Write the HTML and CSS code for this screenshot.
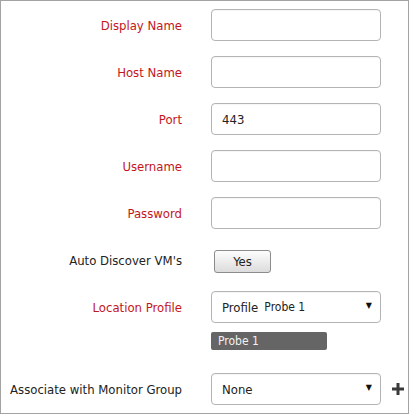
FILE: index.html
```html
<!DOCTYPE html>
<html>
<head>
<meta charset="utf-8">
<link rel="stylesheet" href="styles.css">
</head>
<body>
<div class="form">
  <div class="row"><div class="label req">Display Name</div><div class="field"><div class="input"></div></div></div>
  <div class="row"><div class="label req">Host Name</div><div class="field"><div class="input"></div></div></div>
  <div class="row"><div class="label req">Port</div><div class="field"><div class="input">443</div></div></div>
  <div class="row"><div class="label req">Username</div><div class="field"><div class="input"></div></div></div>
  <div class="row"><div class="label req">Password</div><div class="field"><div class="input"></div></div></div>
  <div class="row"><div class="label">Auto Discover VM's</div><div class="field"><div class="btn">Yes</div></div></div>
  <div class="row row-tight"><div class="label req">Location Profile</div><div class="field"><div class="input select"><span class="sel-main">Profile</span><span class="sel-sub">Probe 1</span><span class="arrow">&#9660;</span></div></div></div>
  <div class="tag-row"><div class="tag">Probe 1</div></div>
  <div class="row"><div class="label">Associate with Monitor Group</div><div class="field"><div class="input select"><span class="sel-main">None</span><span class="arrow">&#9660;</span></div><svg class="plus" width="12" height="12" viewBox="0 0 12 12"><path d="M4.5 0h3v4.5H12v3H7.5V12h-3V7.5H0v-3h4.5z" fill="#3a3a3a"/></svg></div></div>
</div>
</body>
</html>
```
FILE: styles.css
```css
html, body { margin: 0; padding: 0; background: #fff; }
body { font-family: "DejaVu Sans Condensed", "DejaVu Sans", Verdana, sans-serif; font-size: 13px; color: #222; }
.form {
  width: 409px; height: 414px; box-sizing: border-box;
  border: 1px solid #a3a3a3;
  padding-top: 8px;
}
.row { display: flex; align-items: center; height: 32px; margin-bottom: 15px; }
.row-tight { margin-bottom: 9px; }
.label { width: 181px; text-align: right; flex: none; padding-top: 1px; }
.req { color: #c4151c; }
.field { margin-left: 29px; display: flex; align-items: center; }
.input {
  width: 170px; height: 32px; box-sizing: border-box;
  border: 1px solid #b4b4b4; border-radius: 4px;
  background: #fff;
  display: flex; align-items: center;
  padding: 0 10px; font-size: 13px; color: #222;
  box-shadow: inset 0 1px 1px rgba(0,0,0,0.04);
}
.select { position: relative; }
.sel-main { font-size: 13px; }
.sel-sub { font-size: 12px; margin-left: 6px; }
.arrow { position: absolute; right: 8px; top: 9px; font-size: 8px; color: #111; font-family: "DejaVu Sans", sans-serif; }
.btn {
  margin-left: 3px; margin-top: 2px;
  width: 57px; height: 23px; box-sizing: border-box;
  border: 1px solid #8c8c8c; border-radius: 3px;
  background: linear-gradient(#fdfdfd, #dcdcdc);
  display: flex; align-items: center; justify-content: center;
  font-size: 13px; color: #222;
}
.tag-row { padding-left: 210px; margin-bottom: 23px; }
.tag {
  width: 116px; height: 18px; box-sizing: border-box;
  background: #656565; color: #f2f2f2; border-radius: 2px;
  font-size: 12px; padding-left: 7px; line-height: 18px;
}
.plus { margin-left: 11px; }
```
